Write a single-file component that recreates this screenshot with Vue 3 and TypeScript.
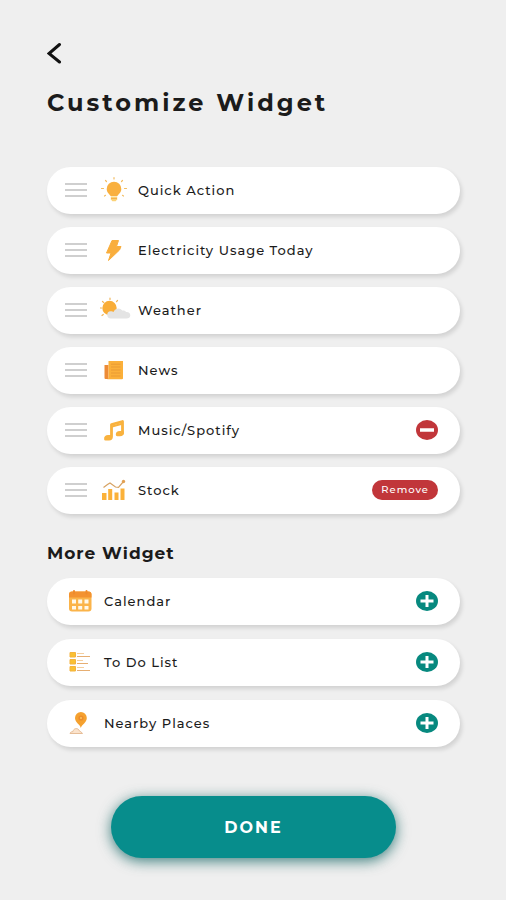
<script setup lang="ts">
import { ref } from 'vue'

type Action = 'none' | 'minus' | 'remove'

interface Widget {
  id: string
  label: string
  action: Action
}

const active = ref<Widget[]>([
  { id: 'bulb', label: 'Quick Action', action: 'none' },
  { id: 'bolt', label: 'Electricity Usage Today', action: 'none' },
  { id: 'weather', label: 'Weather', action: 'none' },
  { id: 'news', label: 'News', action: 'none' },
  { id: 'music', label: 'Music/Spotify', action: 'minus' },
  { id: 'stock', label: 'Stock', action: 'remove' },
])

const more = ref<Widget[]>([
  { id: 'calendar', label: 'Calendar', action: 'none' },
  { id: 'todo', label: 'To Do List', action: 'none' },
  { id: 'places', label: 'Nearby Places', action: 'none' },
])

function askRemove(widget: Widget) {
  widget.action = 'remove'
}

function remove(widget: Widget) {
  active.value = active.value.filter((w) => w !== widget)
  more.value.push({ ...widget, action: 'none' })
}

function add(widget: Widget) {
  more.value = more.value.filter((w) => w !== widget)
  active.value.push({ ...widget, action: 'minus' })
}
</script>

<template>
  <main class="page">
    <button class="back" type="button" aria-label="Back">
      <svg viewBox="0 0 16 22" width="16" height="22" fill="none" stroke="#111" stroke-width="3" stroke-linecap="round">
        <path d="M12.500 2.500 2 11.500l10.500 8.500" />
      </svg>
    </button>
    <h1 class="title">Customize Widget</h1>

    <ul class="list">
      <li v-for="w in active" :key="w.id" class="row">
        <button class="handle" type="button" :aria-label="`Reorder ${w.label}`">
          <span></span><span></span><span></span>
        </button>
        <svg class="icon" viewBox="0 0 32 28" aria-hidden="true">
          <g v-if="w.id === 'bulb'">
            <path d="M14 1.500v1.500M5.500 4.500l1 1M22.500 4.500l-1 1M1.500 12.500h2M24.500 12.500h2M4.500 20l1-.7M23.500 20l-1-.7" fill="none" stroke="#f3bd62" stroke-width="1.200" stroke-linecap="round" />
            <path d="M14 5.700a7.300 7.300 0 0 0-7.300 7.300c0 3.500 2.600 4.800 3.900 7h6.800c1.300-2.200 3.900-3.500 3.900-7a7.300 7.300 0 0 0-7.300-7.300Z" fill="#f9b03f" />
            <path d="M10.800 20.500h6.400v2.800l-1.500 2h-3.400l-1.500-2Z" fill="#fbd277" />
            <path d="M11 22.500h6" stroke="#f3a843" stroke-width=".8" />
          </g>
          <path v-else-if="w.id === 'bolt'" d="M12 4.500h6.500l-2 6h4.500l-1.500 3.500L8.500 24.500l2.500-7.500H6.500Z" fill="#f9ae3d" stroke="#f9ae3d" stroke-linejoin="round" />
          <g v-else-if="w.id === 'weather'">
            <path d="M10 2v1.500M2.500 5.500l1.200 1M17.500 4.500l-1 1.200M0 12h1.500M2 19.500l1.300-1" fill="none" stroke="#f0b65b" stroke-width="1.200" stroke-linecap="round" />
            <circle cx="9.500" cy="12" r="7.200" fill="#f9ad37" />
            <path d="M11 22.500a3.600 3.600 0 0 1-.3-7.200c1.200-.2 1.900.1 2.700.7a5.200 5.200 0 0 1 8.900-1.500c1.700-.3 3.200.3 4 1.500 2.400-.2 4 1.100 4 3.200 0 2.200-1.600 3.300-3.800 3.300Z" fill="#e4e4e4" />
          </g>
          <g v-else-if="w.id === 'news'">
            <path d="M4.500 9h4v14H5.500a1 1 0 0 1-1-1Z" fill="#ed8b36" />
            <path d="M8.500 5H23v17.500a1 1 0 0 1-1 .8H7c1-.3 1.500-1 1.500-2Z" fill="#fbb03a" />
            <path d="M11 8.200h9.500M11 11h9.500M11 14h9.500M11 17h9.500M11 20h9.500" stroke="#e99a34" />
          </g>
          <g v-else-if="w.id === 'music'" fill="none" stroke="#f9b23e" stroke-width="2.800" stroke-linejoin="round" stroke-linecap="round">
            <path d="M11.500 20.500V8.500l11-3v12M11.500 20.500c0 1.500-1 2.500-2.500 2.500H5.500c-.2-1.800 1-2.500 2.500-2.500Z" />
            <path d="M22.500 16.500h-2.800c-1.500 0-2.500.7-2.500 2.300h2.800c1.500 0 2.500-.8 2.500-2.300Z" />
            <path d="m12 10.500 10-2.700" stroke-width="2" />
          </g>
          <g v-else>
            <path d="m3.500 11.500 4-3 2.500-1.500 5.500 4 3 .3 5-5.800" fill="none" stroke="#d7a262" stroke-width="1.200" />
            <circle cx="23.500" cy="5.500" r="1.700" fill="#e2a052" />
            <path d="M2 17h4.500v7H2ZM8.200 13h4v11h-4ZM14.500 16.500h4V24h-4ZM20.500 12.500h4V24h-4Z" fill="#fbb139" />
          </g>
        </svg>
        <span class="label">{{ w.label }}</span>
        <button v-if="w.action === 'minus'" class="round minus" type="button" :aria-label="`Remove ${w.label}`" @click="askRemove(w)">
          <svg viewBox="0 0 22 20" width="22" height="20"><path d="M4 10h14" stroke="#fff" stroke-width="3.500" /></svg>
        </button>
        <button v-else-if="w.action === 'remove'" class="remove" type="button" @click="remove(w)">Remove</button>
      </li>
    </ul>

    <h2 class="subtitle">More Widget</h2>

    <ul class="list more">
      <li v-for="w in more" :key="w.id" class="row">
        <svg class="icon" viewBox="0 0 28 28" aria-hidden="true">
          <g v-if="w.id === 'calendar'">
            <rect x="1" y="4.500" width="22.500" height="20" rx="3" fill="#fbb44a" />
            <path d="M1 10.500v-3a3 3 0 0 1 3-3h16.500a3 3 0 0 1 3 3v3Z" fill="#f39230" />
            <path d="M6 4v2.500M18.500 4v2.500" stroke="#ee8a2c" stroke-width="2" stroke-linecap="round" />
            <path d="M4 12.500h4v4H4ZM10.200 12.500h4v4h-4ZM16.500 12.500h4v4h-4ZM4 19h4v3.500H4ZM10.200 19h4v3.500h-4ZM16.500 19h4v3.500h-4Z" fill="#fff8ea" />
          </g>
          <g v-else-if="w.id === 'todo'">
            <path d="M2 4.500h5.500v4.500H2ZM2 11.500h5.500V16H2ZM2 18.500h5.500V23H2Z" fill="#fac132" stroke="#f4b33e" />
            <path d="M9 5.500h7M9 12.500h6M9 19.500h7" stroke="#f4cfa0" stroke-width="1.200" />
            <path d="M9 8.500h13M9 15.500h11M9 22.500h13" stroke="#e6ae72" stroke-width="1.200" />
          </g>
          <g v-else>
            <path d="M2 24.500c.5-2 2-1.500 3-2 .5-3 4-4 6-1.500 0 1.500 2 1 3.500 3.500Z" fill="#fbe3cc" stroke="#e6bd97" />
            <path d="M12.800 19c-.5-3.500-5.800-5.500-5.800-10a5.900 5.900 0 0 1 11.800 0c0 4.500-5 6.500-6 10Z" fill="#f5a12f" />
            <circle cx="13" cy="9" r="2.600" fill="#ec8b2b" />
            <circle cx="13" cy="9" r="1" fill="#fbc65c" />
          </g>
        </svg>
        <span class="label">{{ w.label }}</span>
        <button class="round plus" type="button" :aria-label="`Add ${w.label}`" @click="add(w)">
          <svg viewBox="0 0 22 20" width="22" height="20"><path d="M4.500 10h13M11 4v12" stroke="#fff" stroke-width="3" /></svg>
        </button>
      </li>
    </ul>

    <button class="done" type="button">DONE</button>
  </main>
</template>

<style>
body {
  margin: 0;
  background: #efefef;
}
</style>

<style scoped>
.page {
  box-sizing: border-box;
  min-height: 100vh;
  padding: 42px 46px 42px 47px;
  display: flex;
  flex-direction: column;
  font-family: Montserrat, Inter, "Liberation Sans", sans-serif;
  color: #1b1b1b;
}

button {
  border: 0;
  padding: 0;
  margin: 0;
  background: none;
  font: inherit;
  cursor: pointer;
}

svg {
  display: block;
}

.back {
  align-self: flex-start;
}

.title {
  margin: 24px 0 0;
  font-size: 24px;
  line-height: 30px;
  font-weight: 700;
  letter-spacing: 3px;
}

.list {
  list-style: none;
  margin: 49px 0 0;
  padding: 0;
  display: flex;
  flex-direction: column;
  gap: 13px;
}

.list.more {
  margin-top: 15px;
  gap: 14px;
}

.row {
  box-sizing: border-box;
  height: 47px;
  padding: 0 22px 2px 18px;
  border-radius: 24px;
  background: #fff;
  box-shadow: 2px 3px 4px rgba(0, 0, 0, 0.12);
  display: flex;
  align-items: center;
}

.handle {
  width: 22px;
  display: flex;
  flex-direction: column;
  gap: 4px;
}

.handle span {
  height: 2px;
  background: #cfcfcf;
}

.icon {
  width: 32px;
  height: 28px;
  margin: 0 6px 0 13px;
}

.more .icon {
  width: 28px;
  margin: 0 8px 0 3px;
}

.label {
  flex: 1;
  font-size: 13px;
  line-height: 18px;
  font-weight: 500;
  letter-spacing: 1px;
}

.round {
  width: 22px;
  height: 20px;
  border-radius: 50%;
}

.minus {
  background: #c1363a;
}

.plus {
  background: #07897f;
}

.remove {
  padding: 0 9px;
  border-radius: 10px;
  background: #c1363a;
  color: #fff;
  font-size: 10px;
  line-height: 20px;
  font-weight: 500;
  letter-spacing: 1px;
}

.subtitle {
  margin: 29px 0 0;
  font-size: 17px;
  line-height: 20px;
  font-weight: 700;
  letter-spacing: 1px;
}

.done {
  align-self: center;
  width: 69%;
  height: 62px;
  margin-top: 49px;
  border-radius: 31px;
  background: #078d8c;
  box-shadow: 0 3px 14px rgba(0, 90, 88, 0.75);
  color: #fff;
  font-size: 16px;
  font-weight: 700;
  letter-spacing: 2px;
}
</style>
